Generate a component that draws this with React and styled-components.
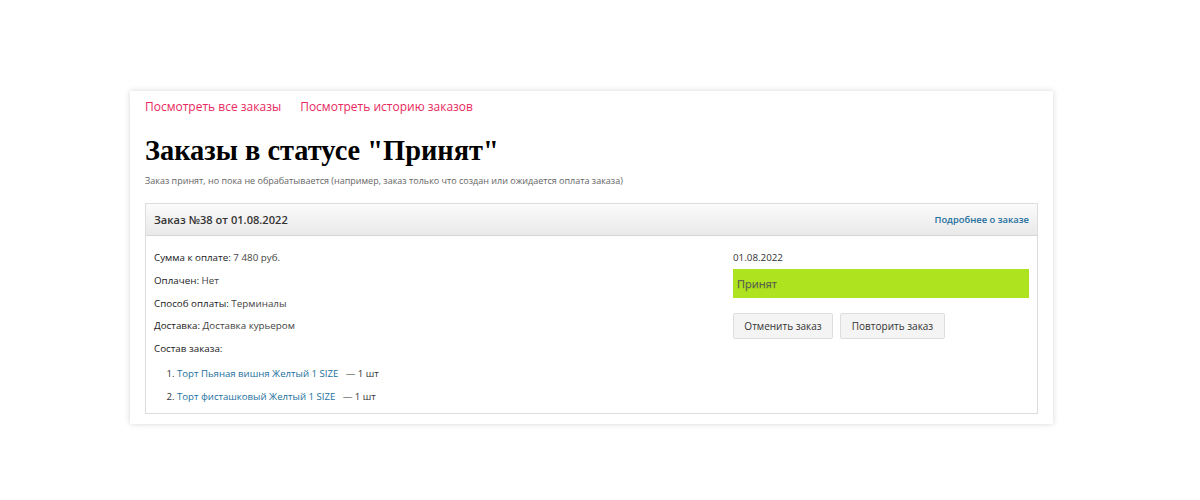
import React from 'react';
import styled, { createGlobalStyle } from 'styled-components';

const GlobalStyle = createGlobalStyle`
  body {
    margin: 0;
    background: #fff;
    font-family: "Open Sans", "Liberation Sans", sans-serif;
  }
`;

const Page = styled.div`
  padding: 91px 0 40px 130px;
`;

const Card = styled.div`
  width: 923px;
  box-sizing: border-box;
  padding: 7px 15px 10px;
  background: #fff;
  box-shadow: 0 0 6px rgba(0, 0, 0, 0.16);
`;

const TopLinks = styled.div`
  display: flex;
  gap: 19px;
  font-size: 12px;
  line-height: 18px;
`;

const TopLink = styled.a`
  color: #e8285e;
  text-decoration: none;
  cursor: pointer;
`;

const Title = styled.h1`
  margin: 18.5px 0 0;
  font-family: "Liberation Serif", "Times New Roman", serif;
  font-size: 28.4px;
  line-height: 32px;
  font-weight: bold;
  color: #000;
`;

const Description = styled.p`
  margin: 7.5px 0 0;
  font-size: 9px;
  line-height: 14px;
  color: #666;
`;

const OrderBox = styled.div`
  margin-top: 15px;
  border: 1px solid #ddd;
`;

const OrderHeader = styled.div`
  height: 31px;
  display: flex;
  align-items: center;
  justify-content: space-between;
  padding: 0 8px;
  background: linear-gradient(#fbfbfb, #e9e9e9);
  border-bottom: 1px solid #d6d6d6;
`;

const OrderTitle = styled.span`
  font-size: 11.1px;
  font-weight: 600;
  color: #333;
`;

const MoreLink = styled.a`
  font-size: 9.4px;
  font-weight: 600;
  color: #1d6f9d;
  text-decoration: none;
  cursor: pointer;
`;

const OrderBody = styled.div`
  display: grid;
  grid-template-columns: 1fr 296px;
  padding: 14px 8px 9px;
`;

const InfoColumn = styled.div`
  display: flex;
  flex-direction: column;
`;

const InfoRow = styled.div`
  font-size: 9.8px;
  line-height: 15px;
  color: #444;
  margin-bottom: ${(props) => props.gap || '7.75px'};
`;

const Label = styled.span`
  color: #1a1a1a;
`;

const ItemList = styled.ol`
  margin: 10px 0 0;
  padding-left: 23px;
  font-size: 9.6px;
  color: #333;
  li {
    line-height: 15px;
    margin-bottom: 7.5px;
  }
  li:last-child {
    margin-bottom: 0;
  }
`;

const ItemLink = styled.a`
  color: #1d6f9d;
  text-decoration: none;
  margin-right: 5px;
`;

const StatusColumn = styled.div`
  display: flex;
  flex-direction: column;
`;

const DateText = styled.div`
  font-size: 9.8px;
  line-height: 15px;
  color: #333;
`;

const StatusBar = styled.div`
  margin-top: 4px;
  height: 29px;
  display: flex;
  align-items: center;
  padding-left: 4px;
  background: #aee31f;
  color: #555;
  font-size: 11px;
  text-shadow: 0 1px 1px rgba(0, 0, 0, 0.15);
`;

const Buttons = styled.div`
  display: flex;
  gap: 7px;
  margin-top: 15px;
`;

const Button = styled.button`
  height: 26px;
  width: ${(props) => props.width};
  padding: 0;
  border: 1px solid #ddd;
  border-radius: 2px;
  background: #f4f4f4;
  color: #333;
  font-family: "Open Sans", "Liberation Sans", sans-serif;
  font-size: 10px;
  cursor: pointer;
`;

const items = [
  'Торт Пьяная вишня Желтый 1 SIZE',
  'Торт фисташковый Желтый 1 SIZE',
];

export default function App() {
  return (
    <>
      <GlobalStyle />
      <Page>
        <Card>
          <TopLinks>
            <TopLink>Посмотреть все заказы</TopLink>
            <TopLink>Посмотреть историю заказов</TopLink>
          </TopLinks>
          <Title>Заказы в статусе "Принят"</Title>
          <Description>
            Заказ принят, но пока не обрабатывается (например, заказ только что создан или ожидается оплата заказа)
          </Description>
          <OrderBox>
            <OrderHeader>
              <OrderTitle>Заказ №38 от 01.08.2022</OrderTitle>
              <MoreLink>Подробнее о заказе</MoreLink>
            </OrderHeader>
            <OrderBody>
              <InfoColumn>
                <InfoRow><Label>Сумма к оплате:</Label> 7 480 руб.</InfoRow>
                <InfoRow><Label>Оплачен:</Label> Нет</InfoRow>
                <InfoRow><Label>Способ оплаты:</Label> Терминалы</InfoRow>
                <InfoRow><Label>Доставка:</Label> Доставка курьером</InfoRow>
                <InfoRow gap="0"><Label>Состав заказа:</Label></InfoRow>
                <ItemList>
                  {items.map((item) => (
                    <li key={item}>
                      <ItemLink>{item}</ItemLink> — 1 шт
                    </li>
                  ))}
                </ItemList>
              </InfoColumn>
              <StatusColumn>
                <DateText>01.08.2022</DateText>
                <StatusBar>Принят</StatusBar>
                <Buttons>
                  <Button width="100px">Отменить заказ</Button>
                  <Button width="105px">Повторить заказ</Button>
                </Buttons>
              </StatusColumn>
            </OrderBody>
          </OrderBox>
        </Card>
      </Page>
    </>
  );
}
